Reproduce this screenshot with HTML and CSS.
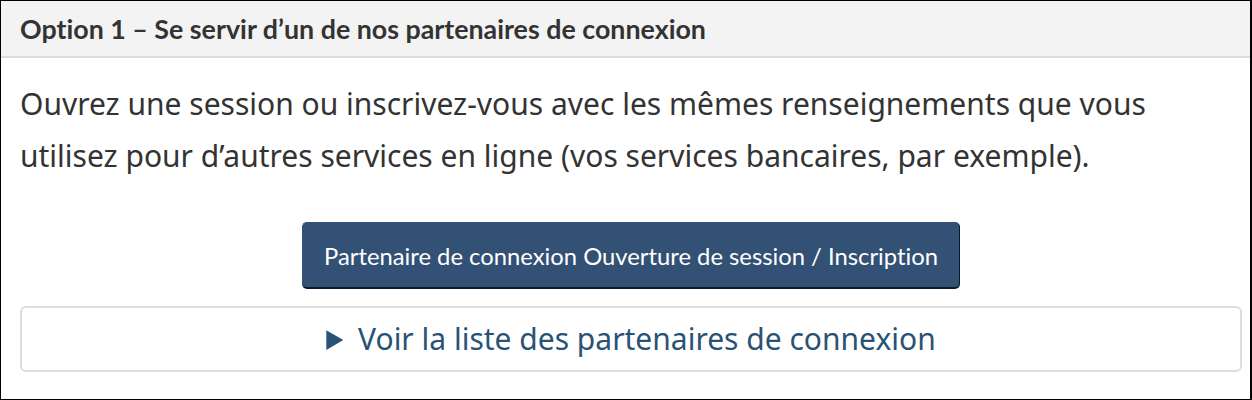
FILE: index.html
```html
<!DOCTYPE html>
<html lang="fr">
<head>
    <meta charset="UTF-8">
    <meta name="viewport" content="width=device-width, initial-scale=1.0">
    <title>Option 1</title>
    <link rel="stylesheet" href="styles.css">
</head>
<body>
    <section class="panel">
        <header class="panel-heading">
            <h2 class="panel-title">Option 1 – Se servir d’un de nos partenaires de connexion</h2>
        </header>
        <div class="panel-body">
            <p class="lead">Ouvrez une session ou inscrivez-vous avec les mêmes renseignements que vous utilisez pour d’autres services en ligne (vos services bancaires, par exemple).</p>
            <div class="actions">
                <a href="#" class="btn-primary">Partenaire de connexion Ouverture de session / Inscription</a>
            </div>
            <details class="partners">
                <summary>Voir la liste des partenaires de connexion</summary>
            </details>
        </div>
    </section>
</body>
</html>
```
FILE: styles.css
```css
* {
    box-sizing: border-box;
    font-variant-ligatures: no-common-ligatures;
}

body {
    margin: 0;
    background: #fff;
    font-family: 'Noto Sans', sans-serif;
    color: #333;
}

a:link {
    text-decoration: none;
}

.panel {
    width: 1252px;
    height: 400px;
    border: 1px solid #000;
    border-right-width: 2px;
}

.panel-heading {
    height: 57px;
    background-color: #f3f3f3;
    border-bottom: 2px solid #ddd;
    padding: 0 19px;
    display: flex;
    align-items: center;
}

.panel-title {
    margin: 0;
    font-family: Lato, sans-serif;
    font-weight: bold;
    font-size: 26.8px;
    color: #333;
}

.panel-body {
    padding: 20px 8px 0 19px;
}

.lead {
    margin: 0;
    font-size: 30px;
    line-height: 52px;
    color: #333;
}

.actions {
    display: flex;
    justify-content: center;
    margin-top: 40px;
}

.btn-primary {
    display: block;
    padding: 0 21px;
    height: 67px;
    line-height: 66px;
    background-color: #335075;
    border: 1px solid #335075;
    border-right-color: #091c2d;
    border-bottom: 2px solid #091c2d;
    border-radius: 5px;
    color: #fff;
    font-family: Lato, sans-serif;
    font-size: 23.8px;
}

.partners {
    margin-top: 17px;
    border: 2px solid #ddd;
    border-radius: 6px;
}

.partners summary {
    height: 62px;
    line-height: 62px;
    text-align: center;
    color: #295376;
    font-size: 30px;
    cursor: pointer;
}
```
